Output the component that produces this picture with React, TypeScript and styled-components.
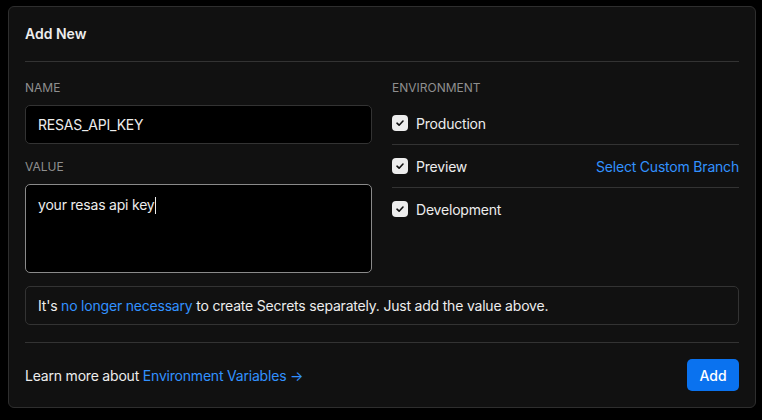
import styled, { createGlobalStyle } from "styled-components";

const Global = createGlobalStyle`
  html, body {
    margin: 0;
    padding: 0;
    background: #000;
  }
  body {
    font-family: Inter, "Noto Sans", sans-serif;
    color: #ededed;
    -webkit-font-smoothing: antialiased;
  }
`;

const Page = styled.div`
  padding: 6px 8px;
`;

const Card = styled.section`
  width: 748px;
  box-sizing: border-box;
  background: #111111;
  border: 1px solid #2e2e2e;
  border-radius: 6px;
  padding: 0 16px;
  letter-spacing: -0.2px;
`;

const Header = styled.div`
  padding: 17px 0;
  border-bottom: 1px solid #333;
  font-size: 14px;
  line-height: 20px;
  font-weight: 600;
  letter-spacing: 0;
  color: #ededed;
`;

const Body = styled.div`
  padding: 18px 0 17px;
  border-bottom: 1px solid #333;
`;

const Columns = styled.div`
  display: grid;
  grid-template-columns: 1fr 1fr;
  column-gap: 20px;
`;

const Column = styled.div`
  display: flex;
  flex-direction: column;
`;

const Label = styled.div<{ $space: number }>`
  font-size: 12px;
  line-height: 16px;
  letter-spacing: 0;
  color: #8f8f8f;
  text-transform: uppercase;
  margin-bottom: ${p => p.$space}px;
`;

const Input = styled.div`
  height: 39px;
  box-sizing: border-box;
  background: #000;
  border: 1px solid #333;
  border-radius: 5px;
  padding: 0 12px;
  display: flex;
  align-items: center;
  font-size: 14px;
  color: #ededed;
  margin-bottom: 15px;
`;

const TextArea = styled.div`
  height: 89px;
  box-sizing: border-box;
  background: #000;
  border: 1px solid #8a8a8a;
  border-radius: 5px;
  padding: 10px 12px;
  font-size: 14px;
  line-height: 20px;
  color: #ededed;
`;

const Caret = styled.span`
  display: inline-block;
  width: 1px;
  height: 17px;
  background: #ededed;
  vertical-align: -4px;
`;

const EnvRow = styled.div`
  height: 42px;
  display: flex;
  align-items: center;
  gap: 8px;
  font-size: 14px;
  color: #ededed;
  border-bottom: 1px solid #333;
  &:last-child {
    border-bottom: none;
  }
`;

const Check = styled.span`
  width: 16px;
  height: 16px;
  border-radius: 4px;
  background: #ededed;
  display: flex;
  align-items: center;
  justify-content: center;
  flex-shrink: 0;
`;

const RowLink = styled.a`
  margin-left: auto;
  color: #3291ff;
  text-decoration: none;
  font-size: 14px;
`;

const Notice = styled.div`
  margin-top: 13px;
  height: 39px;
  box-sizing: border-box;
  border: 1px solid #333;
  border-radius: 5px;
  padding: 0 12px;
  display: flex;
  align-items: center;
  font-size: 14px;
  color: #ededed;
  white-space: pre;
`;

const Link = styled.a`
  color: #3291ff;
  text-decoration: none;
`;

const Footer = styled.div`
  padding: 16px 0;
  display: flex;
  align-items: center;
  justify-content: space-between;
  font-size: 14px;
  color: #ededed;
`;

const Button = styled.button`
  width: 52px;
  height: 32px;
  border: none;
  border-radius: 5px;
  background: #0a72ef;
  color: #fff;
  font-family: inherit;
  font-size: 14px;
  font-weight: 500;
  letter-spacing: 0;
  cursor: pointer;
`;

const CheckMark = () => (
  <Check>
    <svg width="10" height="10" viewBox="0 0 10 10" fill="none">
      <path d="M2 5.2 L4.1 7.2 L8 3" stroke="#111" strokeWidth="1.6" strokeLinecap="round" strokeLinejoin="round" />
    </svg>
  </Check>
);

const envs = ["Production", "Preview", "Development"];

export default function App() {
  return (
    <>
      <Global />
      <Page>
        <Card>
          <Header>Add New</Header>
          <Body>
            <Columns>
              <Column>
                <Label $space={9}>Name</Label>
                <Input>RESAS_API_KEY</Input>
                <Label $space={9}>Value</Label>
                <TextArea>
                  your resas api key<Caret />
                </TextArea>
              </Column>
              <Column>
                <Label $space={6}>Environment</Label>
                {envs.map(env => (
                  <EnvRow key={env}>
                    <CheckMark />
                    {env}
                    {env === "Preview" && <RowLink href="#">Select Custom Branch</RowLink>}
                  </EnvRow>
                ))}
              </Column>
            </Columns>
            <Notice>
              It's <Link href="#">no longer necessary</Link> to create Secrets separately. Just add the value above.
            </Notice>
          </Body>
          <Footer>
            <span>
              Learn more about <Link href="#">Environment Variables →</Link>
            </span>
            <Button>Add</Button>
          </Footer>
        </Card>
      </Page>
    </>
  );
}
